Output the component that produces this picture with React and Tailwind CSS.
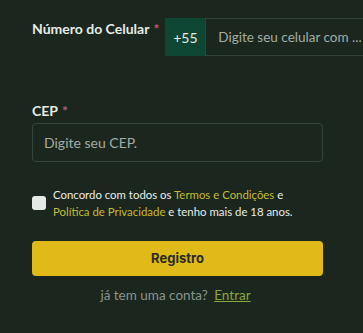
import React from "react";

const App = () => {
  return (
    <div
      className="w-[363px] h-[333px] overflow-hidden bg-[#1b271e] text-[#e6ebe6]"
      style={{ fontFamily: 'Lato, "Open Sans", sans-serif' }}
    >
      {/* Phone row */}
      <div className="flex items-start pt-[18px] pl-[32px] whitespace-nowrap">
        <div className="flex items-center pt-[1px] h-[20px] text-[14px] font-bold">
          <span>Número do Celular</span>
          <span className="ml-[4px] text-[14px] text-[#c2576c]">*</span>
        </div>
        <div className="flex ml-[6px] h-[38px]">
          <div className="w-[40px] flex items-center justify-center bg-[#0e4634] text-[14px] text-[#e3ece6]">
            +55
          </div>
          <div className="w-[200px] flex items-center pl-[12px] border border-[#344538] text-[13.5px] text-[#a3aca5]">
            Digite seu celular com ...
          </div>
        </div>
      </div>

      {/* CEP */}
      <div className="px-[32px] mt-[44px]">
        <div className="flex items-center h-[20px] text-[14px] font-bold">
          <span>CEP</span>
          <span className="ml-[4px] text-[14px] text-[#c2576c]">*</span>
        </div>
        <div className="mt-[3px] w-[291px] h-[39px] flex items-center pl-[11px] rounded-[4px] border border-[#34463a] text-[14px] text-[#a3aca5]">
          Digite seu CEP.
        </div>
      </div>

      {/* Terms */}
      <div className="flex items-center pl-[32px] mt-[24px]">
        <div className="w-[14px] h-[14px] rounded-[3px] bg-[#e6eae6] shrink-0" />
        <p className="ml-[7px] text-[11.4px] leading-[17px] text-[#e8ece8]">
          Concordo com todos os{" "}
          <span className="text-[#c6b933]">Termos e Condições</span> e
          <br />
          <span className="text-[#c6b933]">Política de Privacidade</span> e
          tenho mais de 18 anos.
        </p>
      </div>

      {/* Button */}
      <div className="px-[32px] mt-[21px]">
        <button
          className="w-[291px] h-[35px] rounded-[4px] bg-[#dfba18] text-[13px] font-bold text-[#2a2a1c]"
          style={{ fontFamily: 'Inter, "Open Sans", sans-serif' }}
        >
          Registro
        </button>
      </div>

      <div className="mt-[9px] text-center text-[13.5px] text-[#8a938c] w-[351px]">
        já tem uma conta?{" "}
        <span className="ml-[3px] text-[#8aa83c] underline">Entrar</span>
      </div>
    </div>
  );
};

export default App;
